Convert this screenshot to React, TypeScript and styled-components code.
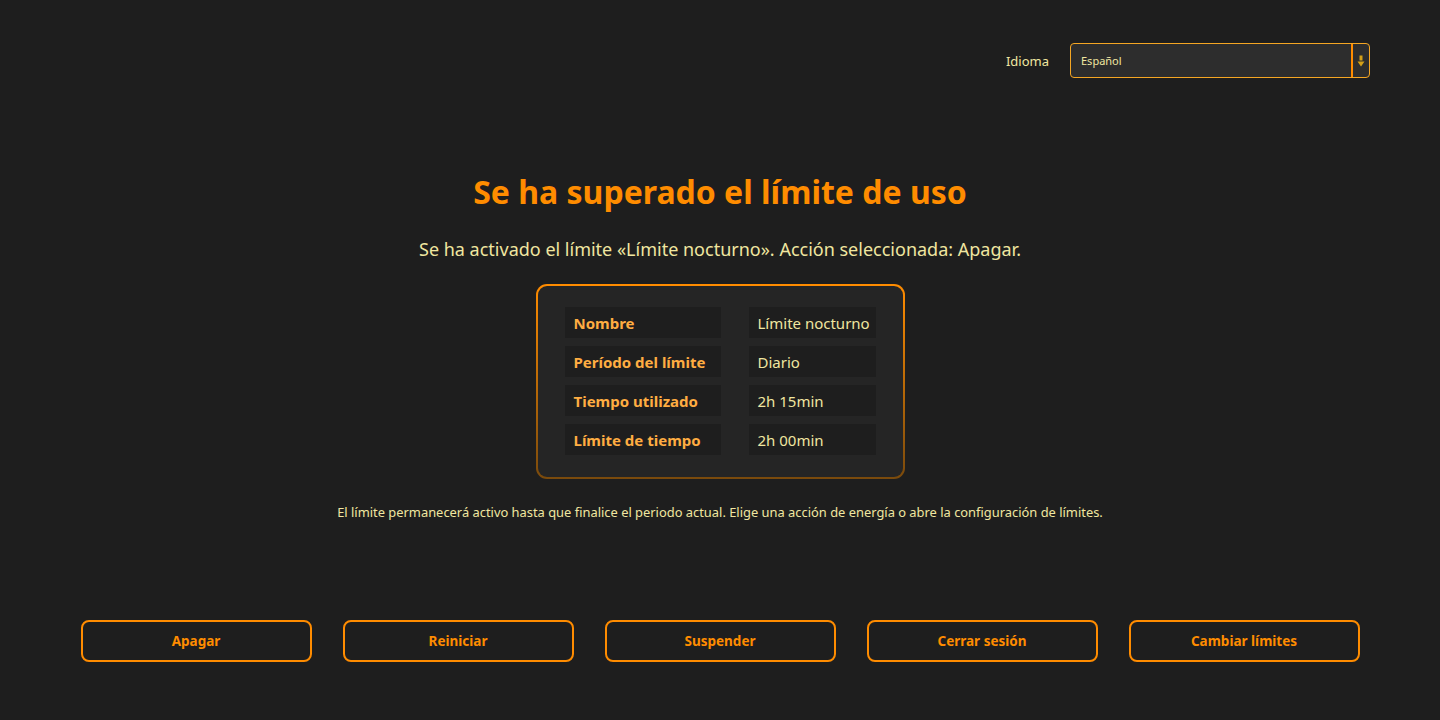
import { Fragment } from "react";
import styled, { createGlobalStyle } from "styled-components";

const GlobalStyle = createGlobalStyle`
  html, body {
    margin: 0;
    padding: 0;
    background: #1e1e1e;
  }
  * {
    box-sizing: border-box;
  }
`;

const rows = [
  { label: "Nombre", value: "Límite nocturno" },
  { label: "Período del límite", value: "Diario" },
  { label: "Tiempo utilizado", value: "2h 15min" },
  { label: "Límite de tiempo", value: "2h 00min" },
];

const actions = ["Apagar", "Reiniciar", "Suspender", "Cerrar sesión", "Cambiar límites"];

export default function App() {
  return (
    <>
      <GlobalStyle />
      <Page>
        <TopBar>
          <LangLabel>Idioma</LangLabel>
          <Select>
            <SelectText>Español</SelectText>
            <SelectArrow>
              <svg width="8" height="12" viewBox="0 0 8 12">
                <rect x="2.5" y="0.5" width="3" height="5" fill="#d4a017" />
                <path d="M4 11.5 L0.5 6.5 H7.5 Z" fill="#d4a017" />
              </svg>
            </SelectArrow>
          </Select>
        </TopBar>

        <Main>
          <Title>Se ha superado el límite de uso</Title>
          <Subtitle>
            Se ha activado el límite «Límite nocturno». Acción seleccionada: Apagar.
          </Subtitle>
          <Card>
            <Grid>
              {rows.map((r) => (
                <Fragment key={r.label}>
                  <LabelCell>{r.label}</LabelCell>
                  <ValueCell>{r.value}</ValueCell>
                </Fragment>
              ))}
            </Grid>
          </Card>
          <Note>
            El límite permanecerá activo hasta que finalice el periodo actual. Elige una acción de
            energía o abre la configuración de límites.
          </Note>
        </Main>

        <Actions>
          {actions.map((a) => (
            <ActionButton key={a}>{a}</ActionButton>
          ))}
        </Actions>
      </Page>
    </>
  );
}

const Page = styled.div`
  width: 100%;
  height: 720px;
  display: flex;
  flex-direction: column;
  font-family: "Noto Sans", "Open Sans", sans-serif;
  background: #1e1e1e;
`;

const TopBar = styled.div`
  display: flex;
  justify-content: flex-end;
  align-items: center;
  gap: 21px;
  padding: 43px 70px 0 0;
`;

const LangLabel = styled.span`
  color: #f0e6a0;
  font-size: 13px;
`;

const Select = styled.div`
  width: 300px;
  height: 35px;
  display: flex;
  align-items: stretch;
  background: #2d2d2d;
  border: 1px solid #f5a623;
  border-radius: 4px;
`;

const SelectText = styled.div`
  flex: 1;
  display: flex;
  align-items: center;
  padding-left: 10px;
  color: #f0e6a0;
  font-size: 11px;
`;

const SelectArrow = styled.div`
  width: 18px;
  display: flex;
  align-items: center;
  justify-content: center;
  border-left: 2px solid #ff8c00;
`;

const Main = styled.div`
  display: flex;
  flex-direction: column;
  align-items: center;
  padding-top: 93px;
`;

const Title = styled.h1`
  margin: 0;
  color: #ff8c00;
  font-size: 32px;
  font-weight: 700;
  line-height: 42px;
`;

const Subtitle = styled.p`
  margin: 24px 0 0;
  color: #f0e6a0;
  font-size: 18px;
  line-height: 24px;
`;

const Card = styled.div`
  margin-top: 23px;
  padding: 2px;
  border-radius: 11px;
  background: linear-gradient(to bottom, #ff8c00, #7a4a0c);
`;

const Grid = styled.div`
  display: grid;
  grid-template-columns: 156px 127px;
  column-gap: 28px;
  row-gap: 8px;
  padding: 21px 27px 22px;
  background: #252525;
  border-radius: 9px;
`;

const Cell = styled.div`
  height: 31px;
  display: flex;
  align-items: center;
  padding-left: 9px;
  background: #1e1e1e;
  font-size: 15px;
  white-space: nowrap;
`;

const LabelCell = styled(Cell)`
  color: #ffad42;
  font-weight: 700;
`;

const ValueCell = styled(Cell)`
  color: #f0e6a0;
`;

const Note = styled.p`
  margin: 24px 0 0;
  color: #f0e6a0;
  font-size: 12.9px;
  line-height: 18px;
`;

const Actions = styled.div`
  margin-top: auto;
  margin-bottom: 58px;
  display: grid;
  grid-template-columns: repeat(5, 231px);
  justify-content: center;
  column-gap: 31px;
`;

const ActionButton = styled.button`
  height: 42px;
  background: transparent;
  border: 2px solid #ff8c00;
  border-radius: 8px;
  color: #ff8c00;
  font-family: inherit;
  font-size: 13.5px;
  font-weight: 700;
  cursor: pointer;
`;
